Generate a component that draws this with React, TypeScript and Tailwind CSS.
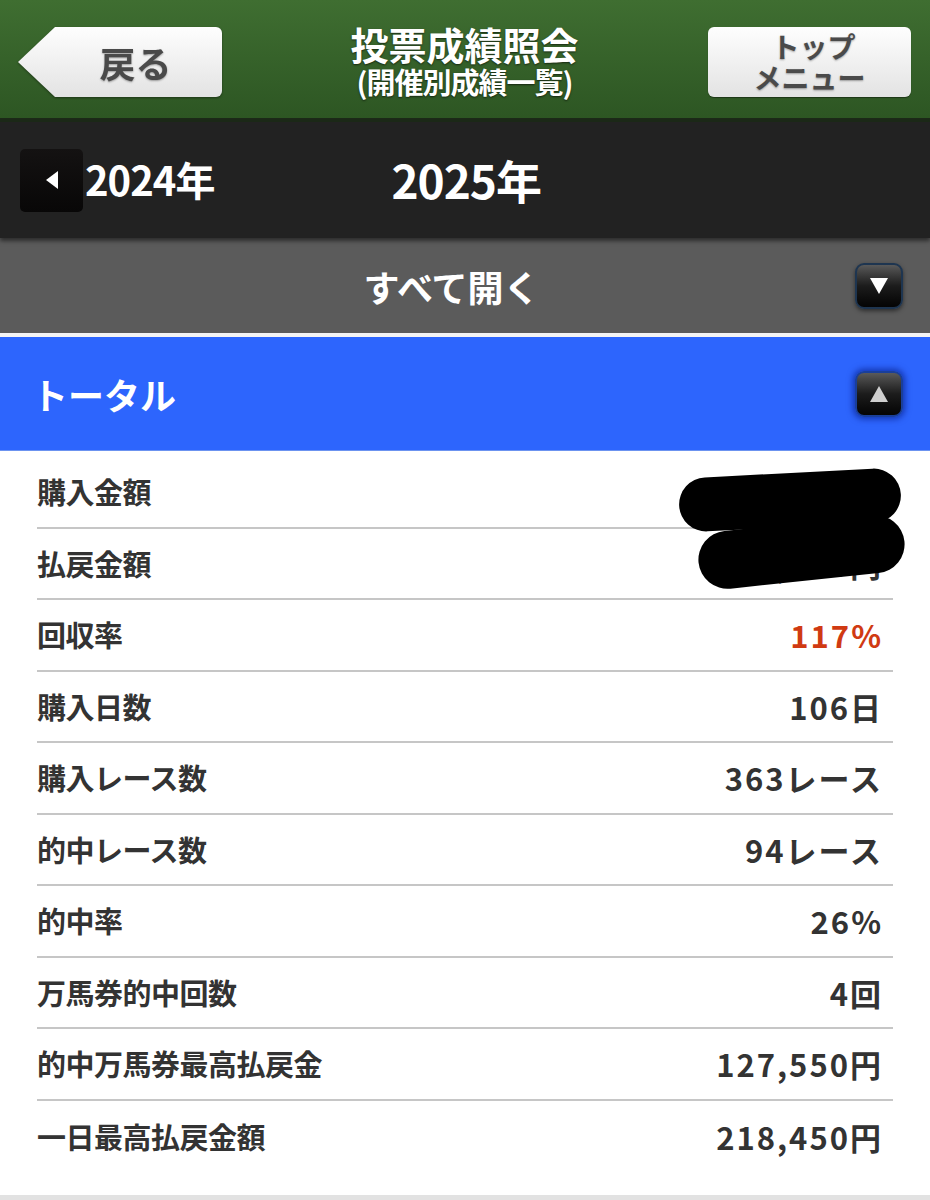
import React from "react";

const rows: { label: string; value: string; red?: boolean; hidden?: number }[] = [
  { label: "購入金額", value: "000,000円", hidden: 1 },
  { label: "払戻金額", value: "000,000円", hidden: 2 },
  { label: "回収率", value: "117%", red: true },
  { label: "購入日数", value: "106日" },
  { label: "購入レース数", value: "363レース" },
  { label: "的中レース数", value: "94レース" },
  { label: "的中率", value: "26%" },
  { label: "万馬券的中回数", value: "4回" },
  { label: "的中万馬券最高払戻金", value: "127,550円" },
  { label: "一日最高払戻金額", value: "218,450円" },
];

const jp = { fontFamily: '"Noto Sans CJK JP", "Noto Sans", sans-serif' };

function ArrowBtn({ up }: { up?: boolean }) {
  return (
    <div
      className={`w-[48px] h-[46px] rounded-[9px] bg-gradient-to-b from-[#5a5a5a] via-[#1c1c1c] to-[#050505] flex items-center justify-center border-2 ${
        up ? "border-[#1a3f9a] shadow-[0_0_6px_2px_rgba(0,20,120,0.6)]" : "border-[#1e3550] shadow-[0_2px_4px_rgba(0,0,0,0.5)]"
      }`}
    >
      <svg width="22" height="20" viewBox="0 0 22 20">
        {up ? (
          <polygon points="11,2 20,18 2,18" fill="#cfcfcf" />
        ) : (
          <polygon points="2,2 20,2 11,18" fill="#ffffff" />
        )}
      </svg>
    </div>
  );
}

export default function App() {
  return (
    <div className="w-[930px] h-[1200px] bg-white overflow-hidden" style={jp}>
      {/* Header */}
      <div className="h-[118px] bg-gradient-to-b from-[#3f6e31] to-[#2d5623] grid grid-cols-[1fr_auto_1fr] items-center pl-[18px] pr-[19px]">
        <div className="flex h-[70px] mt-[6px] drop-shadow-[0_1px_1px_rgba(0,0,0,0.4)] justify-self-start">
          <div className="w-[37px] h-[70px] bg-gradient-to-b from-[#fefefe] to-[#e3e3e3] [clip-path:polygon(100%_0,100%_100%,0_50%)]" />
          <div className="w-[167px] h-[70px] bg-gradient-to-b from-[#fefefe] to-[#e3e3e3] rounded-r-[6px] flex items-center justify-center pr-[6px]">
            <span className="text-[36px] font-bold text-[#4a4a4a] leading-none [text-shadow:0_1px_2px_rgba(0,0,0,0.35)]">戻る</span>
          </div>
        </div>
        <div className="flex flex-col items-center text-white font-bold mt-[2px] [text-shadow:0_1px_2px_rgba(0,0,0,0.6)]">
          <div className="text-[38px] leading-[42px]">投票成績照会</div>
          <div className="text-[29px] leading-[32px] tracking-[-1px]">(開催別成績一覧)</div>
        </div>
        <div className="justify-self-end w-[203px] h-[70px] mt-[6px] rounded-[6px] bg-gradient-to-b from-[#fefefe] to-[#e3e3e3] flex items-center justify-center shadow-[0_1px_1px_rgba(0,0,0,0.4)]">
          <p className="text-center text-[#4a4a4a] font-bold text-[28px] leading-[31px] [text-shadow:0_1px_2px_rgba(0,0,0,0.35)]">
            <span className="pl-[8px]">トップ</span>
            <br />
            メニュー
          </p>
        </div>
      </div>
      <div className="h-[4px] bg-[#1c2918]" />

      {/* Year bar */}
      <div className="h-[116px] bg-[#222222] flex items-center pl-[20px] shadow-[0_3px_4px_rgba(0,0,0,0.5)] relative">
        <div className="w-[63px] h-[63px] rounded-[5px] bg-gradient-to-b from-[#141212] to-[#080707] flex items-center justify-center">
          <svg width="16" height="20" viewBox="0 0 16 20">
            <polygon points="14,1 14,19 2,10" fill="#ffffff" />
          </svg>
        </div>
        <span className="text-white font-bold text-[40px] leading-none ml-[2px] tracking-[-1px] -mt-[3px]">2024年</span>
        <span className="text-white font-bold text-[46px] leading-none ml-[177px] tracking-[-1px] -mt-[3px]">2025年</span>
      </div>

      {/* Open all bar */}
      <div className="h-[95px] bg-[#5b5b5b] grid grid-cols-[1fr_auto_1fr] items-center pr-[27px]">
        <div />
        <span className="text-white font-bold text-[36px] leading-none">すべて開く</span>
        <div className="justify-self-end">
          <ArrowBtn />
        </div>
      </div>
      <div className="h-[4px] bg-[#f4f4f4]" />

      {/* Total bar */}
      <div className="h-[113px] bg-[#2d65fd] flex items-center justify-between pl-[32px] pr-[27px]">
        <span className="text-white font-bold text-[36px] leading-none">トータル</span>
        <ArrowBtn up />
      </div>
      <div className="h-[1px] bg-[#6c93f0]" />

      {/* Rows */}
      <div className="px-[37px] pt-[6px] pb-[23px] relative">
        {rows.map((r, i) => (
          <div
            key={r.label}
            className={`h-[71.5px] flex items-center justify-between pr-[12px] relative ${
              i < rows.length - 1 ? "border-b-2 border-[#c6c6c6]" : ""
            }`}
          >
            <span className="text-[29px] font-bold text-[#333333] leading-none tracking-[-0.5px]">{r.label}</span>
            <span
              className={`text-[31px] font-bold leading-none tracking-[2px] -mr-[2px] ${
                r.red ? "text-[#d03a12]" : "text-[#333333]"
              }`}
            >
              {r.value}
            </span>
            {r.hidden === 1 && (
              <div className="absolute right-[-8px] top-[16px] w-[222px] h-[54px] bg-black rounded-[28px] -rotate-[3deg] z-10" />
            )}
            {r.hidden === 2 && (
              <div className="absolute right-[-12px] top-[-6px] w-[207px] h-[58px] bg-black rounded-[30px] -rotate-[6deg] z-10" />
            )}
          </div>
        ))}
      </div>
      <div className="h-[6px] bg-[#e2e2e2]" />
    </div>
  );
}
